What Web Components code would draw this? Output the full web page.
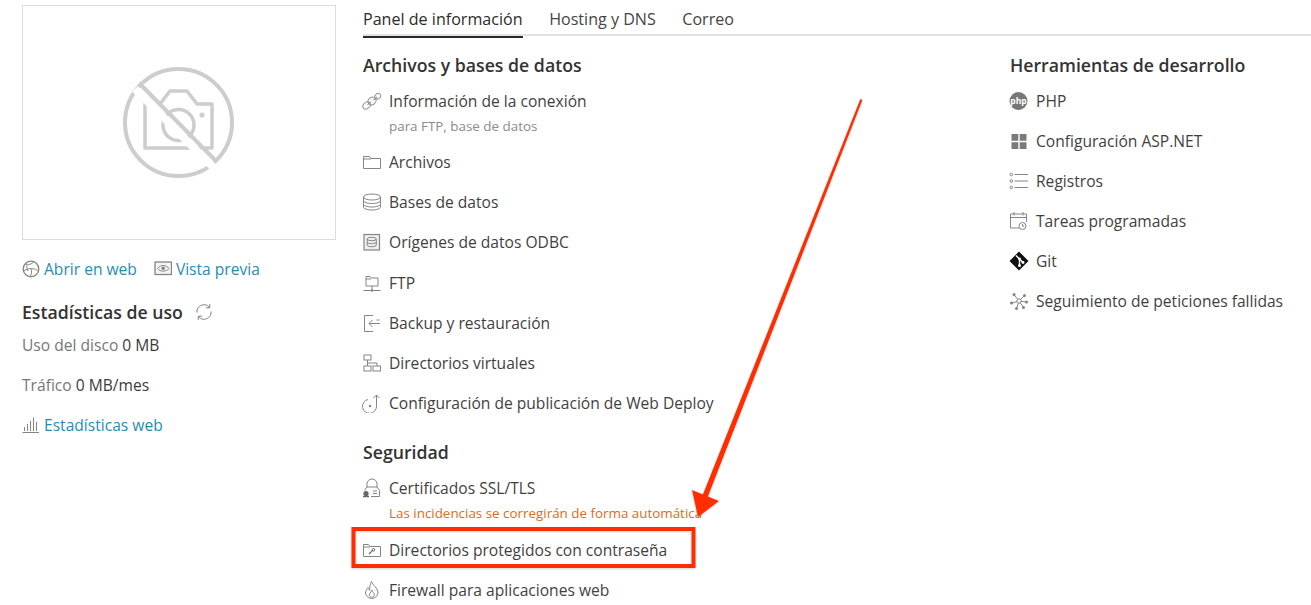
<!DOCTYPE html>
<html lang="es">
<head>
<meta charset="utf-8">
<title>Panel de información</title>
<style>
html,body{margin:0;padding:0;background:#fff;height:605px;overflow:hidden}
body{font-family:"Open Sans","Liberation Sans",sans-serif;color:#3b3b3b}
</style>
</head>
<body>
<app-page>
  <site-side slot="side"></site-side>
  <tab-bar slot="tabs"></tab-bar>
  <tool-group slot="col1" title="Archivos y bases de datos" class="first">
    <tool-row icon="link" sub="para FTP, base de datos">Información de la conexión</tool-row>
    <tool-row icon="folder">Archivos</tool-row>
    <tool-row icon="db">Bases de datos</tool-row>
    <tool-row icon="odbc">Orígenes de datos ODBC</tool-row>
    <tool-row icon="ftp">FTP</tool-row>
    <tool-row icon="backup">Backup y restauración</tool-row>
    <tool-row icon="vdirs">Directorios virtuales</tool-row>
    <tool-row icon="deploy">Configuración de publicación de Web Deploy</tool-row>
  </tool-group>
  <tool-group slot="col1" title="Seguridad" class="second">
    <tool-row icon="ssl" warn="Las incidencias se corregirán de forma automática">Certificados SSL/TLS</tool-row>
    <tool-row icon="fkey">Directorios protegidos con contraseña</tool-row>
    <tool-row icon="flame">Firewall para aplicaciones web</tool-row>
  </tool-group>
  <tool-group slot="col2" title="Herramientas de desarrollo">
    <tool-row icon="php">PHP</tool-row>
    <tool-row icon="win">Configuración ASP.NET</tool-row>
    <tool-row icon="list">Registros</tool-row>
    <tool-row icon="cal">Tareas programadas</tool-row>
    <tool-row icon="git">Git</tool-row>
    <tool-row icon="net">Seguimiento de peticiones fallidas</tool-row>
  </tool-group>
  <call-out slot="over"></call-out>
</app-page>
<script>
const G='fill="none" stroke="#858585" stroke-width="1"';
const ICONS={
link:`<g fill="none" stroke="#959595" stroke-width="1" transform="rotate(-40 10 10)"><rect x="-1" y="7" width="8" height="6" rx="3"/><rect x="6" y="6.500" width="8" height="7" rx="3.500"/><rect x="14.500" y="7.500" width="6" height="5" rx="2.500"/><path d="M4 10h5M11.500 10h5"/></g>`,
folder:`<path ${G} d="M1.500 16.500V4.500h6l1.500 2h9.500v10z M1.500 7h7.500"/>`,
db:`<g ${G}><ellipse cx="10" cy="5" rx="8.500" ry="3"/><path d="M1.500 5v10c0 1.700 3.800 3 8.500 3s8.500-1.300 8.500-3V5M1.500 8.500c0 1.700 3.800 3 8.500 3s8.500-1.300 8.500-3M1.500 12c0 1.700 3.800 3 8.500 3s8.500-1.300 8.500-3"/></g>`,
odbc:`<rect x="2" y="2.500" width="15.500" height="15.500" fill="#eee" stroke="#858585" stroke-width="1.200"/><g ${G}><ellipse cx="9.750" cy="7" rx="4.500" ry="1.700"/><path d="M5.250 7v6c0 1 2 1.700 4.500 1.700s4.500-.7 4.500-1.700V7M5.250 10c0 1 2 1.700 4.500 1.700s4.500-.7 4.500-1.700"/></g>`,
ftp:`<path ${G} d="M4 13V3.500h4l1.200 1.500H16v8zM4 6h5M10 13v4M1.500 17.500h17"/><circle cx="10" cy="17.500" r="1.200" fill="#858585"/>`,
backup:`<path ${G} d="M11 2.500H2.500v16H11M18 10.500H7M10.500 7l-3.500 3.500 3.500 3.500"/><path ${G} d="M14.500 7h3"/>`,
vdirs:`<g ${G}><rect x="2" y="2" width="7" height="5"/><rect x="2" y="13" width="7" height="5"/><rect x="11" y="13" width="7.500" height="5"/><path d="M5.500 7v6M5.500 10H15v3"/></g>`,
deploy:`<path ${G} d="M7 6.500A7 7 0 1 0 15.500 13V2M12.500 5l3-3 3 3" transform="translate(-1 0)"/><circle cx="8" cy="13" r="1.200" fill="#858585"/>`,
ssl:`<g ${G}><path d="M5 9V6a5 5 0 0 1 10 0v3"/><path d="M2.500 12.500 5 9h10l2.500 3.500v6H9"/><path d="M11 13h4M11 15.500h4"/></g><circle cx="4" cy="15.500" r="2.600" fill="#666"/><path d="M1 18.500h6" stroke="#666" stroke-width="1.500"/>`,
fkey:`<path ${G} d="M1.500 16.500V4.500h5l1.500 2h10.500v10zM1.500 7h6.500"/><path fill="none" stroke="#666" stroke-width="1.100" d="M7 14l3.800-3.800M8.200 13.800l-1-1"/><circle cx="11.500" cy="9.800" r="1.300" fill="none" stroke="#666"/>`,
flame:`<path ${G} d="M9.500 1.500c1 4 6.500 6 6.500 11.500a6.300 6.300 0 0 1-12.500 0c0-2.500 1.500-4 2.500-5.500.3 1.500 1 2.300 1.800 2.800C7.500 7 8 4 9.500 1.500z"/><path ${G} d="M9.800 10c.3 2 3 3 2.500 5.500-.4 2-4.500 2.300-5 0-.3-2 1.800-3 2.500-5.500z"/>`,
php:`<circle cx="9.500" cy="10" r="9" fill="#777"/><text x="9.500" y="12.500" text-anchor="middle" font-family="Open Sans,sans-serif" font-weight="700" font-size="8.500" fill="#fff">php</text>`,
win:`<path fill="#7a7a7a" d="M2.500 3h6.800v6.800H2.500zM10.700 3h6.800v6.800h-6.800zM2.500 11.200h6.800V18H2.500zM10.700 11.200h6.800V18h-6.800z"/>`,
list:`<g ${G}><path d="M5.500 3.500H19M5.500 10H19M5.500 16.500H19"/><circle cx="2.300" cy="3.500" r="1.300"/><circle cx="2.300" cy="10" r="1.300"/><circle cx="2.300" cy="16.500" r="1.300"/></g>`,
cal:`<g ${G}><path d="M10 17H1.500V3h16v8M1.500 6.500h16M5 1v3.500M14 1v3.500"/><circle cx="13.500" cy="15" r="3.500"/><path d="M13.500 13v2.200h1.800"/></g>`,
git:`<path fill="#111" d="M10 .5 19.500 10 10 19.500.5 10z"/><path stroke="#fff" stroke-width="1.400" fill="none" d="M7 4.500 14 11.500M10.500 8v6"/><circle cx="10.500" cy="14.500" r="1.500" fill="#fff"/><circle cx="10.500" cy="8" r="1.400" fill="#fff"/><circle cx="14" cy="11.500" r="1.400" fill="#fff"/>`,
net:`<g fill="none" stroke="#858585"><path d="M10 10 5 3.500M10 10l5.500-5.500M10 10l-7 2M10 10l7 1M10 10l-2.500 7.500M10 10l4.500 6.500"/><circle cx="10" cy="10" r="2.200" fill="#fff"/></g><g fill="#858585"><circle cx="5" cy="3.500" r="1.500"/><circle cx="15.500" cy="4.500" r="1.500"/><circle cx="2.500" cy="12" r="1.500"/><circle cx="17.500" cy="11" r="1.500"/><circle cx="7.500" cy="17.500" r="1.500"/><circle cx="14.500" cy="16.500" r="1.500"/></g>`,
globe:`<g ${G}><circle cx="9" cy="9" r="7.800" stroke-width="1.300"/><path d="M3 4c3 1 7 .5 9-2.500M1.500 11c3-2 7-3 11-2 1.500.4 3 1 3.500 2.500M9 8.500c1 3 .5 6-1 8.500M5 5c-.5 2 0 4.500 1 6"/></g>`,
eye:`<rect x="1" y="2" width="16.500" height="12.500" fill="#f4f4f4" stroke="#858585" stroke-width="1.300"/><path ${G} d="M3.500 8.500C6.500 4.500 12 4.500 15 8.500 12 12 6.500 12 3.500 8.500z"/><circle cx="9.200" cy="8.300" r="1.800" fill="#858585"/>`,
sync:`<g ${G}><path d="M2 9.500A7 7 0 0 1 14.500 4.500M16 8.500A7 7 0 0 1 3.500 13.500"/><path d="M14.800 1v3.800H11M3.200 17v-3.800H7"/></g>`,
bars:`<g ${G}><path d="M.5 16.500H17M2.500 15v-4M5.500 15V8M8.500 15V5M11.500 15V1.500M14.500 15V6"/></g>`
};
const svg=(name,size=20)=>`<svg xmlns="http://www.w3.org/2000/svg" width="${size}" height="${size}" viewBox="0 0 ${size} ${size}" aria-hidden="true">${ICONS[name]||''}</svg>`;

customElements.define('app-page',class extends HTMLElement{
  constructor(){super();this.attachShadow({mode:'open'}).innerHTML=`<style>
  :host{display:block;position:relative;width:1311px;height:605px;overflow:hidden}
  .wrap{display:grid;grid-template-columns:314px 1fr;column-gap:27px;padding:5px 0 0 22px;box-sizing:border-box;height:605px}
  .cols{display:grid;grid-template-columns:647px 1fr;margin-top:0}
  .c{display:flex;flex-direction:column}
  </style>
  <div class="wrap">
    <div><slot name="side"></slot></div>
    <div>
      <slot name="tabs"></slot>
      <div class="cols"><div class="c"><slot name="col1"></slot></div><div class="c"><slot name="col2"></slot></div></div>
    </div>
  </div>
  <slot name="over"></slot>`;}
});

customElements.define('site-side',class extends HTMLElement{
  constructor(){super();this.attachShadow({mode:'open'}).innerHTML=`<style>
  :host{display:block;font-size:15.600px;line-height:20px}
  .shot{height:233px;border:1px solid #dcdcdc;display:flex;align-items:center;justify-content:center}
  .links{display:flex;gap:17px;margin-top:19px}
  a{color:#1f8db5;text-decoration:none;display:inline-flex;align-items:center;gap:4px}
  svg{display:block;flex:none}
  h3{margin:21px 0 0;font-size:17.700px;line-height:24px;font-weight:600;color:#333;display:flex;align-items:center;gap:12px}
  p{margin:0;color:#777}
  p b{font-weight:400;color:#3b3b3b}
  .u{margin-top:11px}
  .t{margin-top:20px}
  .w{margin-top:20px}
  </style>
  <div class="shot">
    <svg width="112" height="112" viewBox="0 0 112 112" aria-hidden="true">
      <circle cx="55.500" cy="55.500" r="53.500" fill="none" stroke="#cdcdcd" stroke-width="4"/>
      <g fill="none" stroke="#cdcdcd" stroke-width="3.500" stroke-linejoin="round">
        <path d="M28 37H22V81H89V37H74L64 24H47L37 37"/>
        <circle cx="55.500" cy="58" r="15.500"/>
      </g>
      <circle cx="79" cy="48" r="2.600" fill="#cdcdcd"/>
      <path d="M12 22 90 100" stroke="#fff" stroke-width="8"/>
      <path d="M16 16 94 95" stroke="#cdcdcd" stroke-width="4"/>
    </svg>
  </div>
  <div class="links"><a href="#">${svg('globe',18)}Abrir en web</a><a href="#">${svg('eye',18)}Vista previa</a></div>
  <h3>Estadísticas de uso ${svg('sync',18)}</h3>
  <p class="u">Uso del disco <b>0 MB</b></p>
  <p class="t">Tráfico <b>0 MB/mes</b></p>
  <p class="w"><a href="#">${svg('bars',18)}Estadísticas web</a></p>`;}
});

customElements.define('tab-bar',class extends HTMLElement{
  constructor(){super();this.attachShadow({mode:'open'}).innerHTML=`<style>
  :host{display:flex;gap:26.500px;border-bottom:2px solid #e4e4e4;font-size:16.100px;font-weight:500;line-height:20px;height:29px;box-sizing:content-box;padding-top:0}
  span{display:block;padding-top:4px;height:27px;margin-bottom:-2px;box-sizing:content-box;color:#444}
  .on{border-bottom:2px solid #2b2b2b;color:#2b2b2b}
  </style><span class="on">Panel de información</span><span>Hosting y DNS</span><span>Correo</span>`;}
});

customElements.define('tool-group',class extends HTMLElement{
  constructor(){super();const t=this.getAttribute('title');this.removeAttribute('title');this.attachShadow({mode:'open'}).innerHTML=`<style>
  :host{display:block;padding-top:16px}
  :host(.first){--row-gap:20.150px}
  :host(.second){padding-top:6px}
  h2{margin:0 0 13px;font-size:17.700px;line-height:26px;font-weight:600;color:#333}
  </style><h2>${t}</h2><slot></slot>`;}
});

customElements.define('tool-row',class extends HTMLElement{
  constructor(){super();const s=this.getAttribute('sub'),w=this.getAttribute('warn');this.attachShadow({mode:'open'}).innerHTML=`<style>
  :host{display:grid;grid-template-columns:26px 1fr;font-size:15.600px;line-height:20px;color:#3f3f3f;margin-bottom:var(--row-gap,20px)}
  svg{display:block;margin-left:-1px}
  .i{height:20px}
  .s{font-size:13.400px;line-height:16px;margin:7px 0 -2px;color:#8a8a8a;white-space:nowrap}
  .w{color:#dd6b20;margin:7px 0 -1px}
  </style><div class="i">${svg(this.getAttribute('icon'))}</div><div><slot></slot>${s?`<div class="s">${s}</div>`:''}${w?`<div class="s w">${w}</div>`:''}</div>`;}
});

customElements.define('call-out',class extends HTMLElement{
  constructor(){super();this.attachShadow({mode:'open'}).innerHTML=`<style>
  :host{position:absolute;inset:0;display:block;pointer-events:none}
  svg{position:absolute;left:0;top:0;filter:drop-shadow(0 1px 1px rgba(0,0,0,.18))}
  </style><svg width="1311" height="605" viewBox="0 0 1311 605" aria-hidden="true">
    <path fill="#ff2d00" d="M860.400 99 862.400 100 707.500 497.500 702.500 495.500z"/>
    <path fill="#ff2d00" d="M692 490 719 501 698 517z"/>
    <rect x="353.500" y="529" width="340" height="37" fill="none" stroke="#ff2d00" stroke-width="4"/>
  </svg>`;}
});
</script>
</body>
</html>
